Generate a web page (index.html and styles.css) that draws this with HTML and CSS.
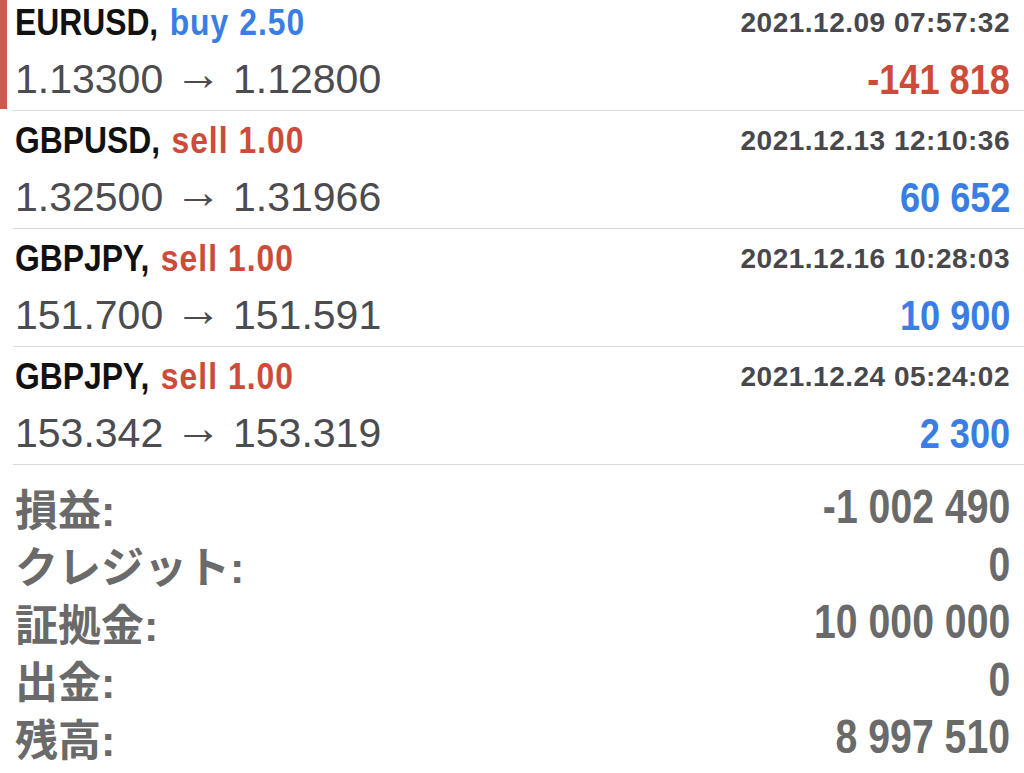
FILE: index.html
```html
<!DOCTYPE html>
<html lang="ja">
<head>
<meta charset="utf-8">
<title>History</title>
<link rel="stylesheet" href="styles.css">
</head>
<body>
<div class="screen">
  <div class="list">
    <div class="trade">
      <div class="accent accent-loss"></div>
      <div class="trade-body">
        <div class="line-top">
          <div class="title"><span class="symbol">EURUSD,</span> <span class="side buy">buy 2.50</span></div>
          <div class="time">2021.12.09 07:57:32</div>
        </div>
        <div class="line-bottom">
          <div class="prices">1.13300 <span class="arrow">→</span> 1.12800</div>
          <div class="profit loss">-141 818</div>
        </div>
      </div>
    </div>
    <div class="trade">
      <div class="accent"></div>
      <div class="trade-body">
        <div class="line-top">
          <div class="title"><span class="symbol">GBPUSD,</span> <span class="side sell">sell 1.00</span></div>
          <div class="time">2021.12.13 12:10:36</div>
        </div>
        <div class="line-bottom">
          <div class="prices">1.32500 <span class="arrow">→</span> 1.31966</div>
          <div class="profit gain">60 652</div>
        </div>
      </div>
    </div>
    <div class="trade">
      <div class="accent"></div>
      <div class="trade-body">
        <div class="line-top">
          <div class="title"><span class="symbol">GBPJPY,</span> <span class="side sell">sell 1.00</span></div>
          <div class="time">2021.12.16 10:28:03</div>
        </div>
        <div class="line-bottom">
          <div class="prices">151.700 <span class="arrow">→</span> 151.591</div>
          <div class="profit gain">10 900</div>
        </div>
      </div>
    </div>
    <div class="trade">
      <div class="accent"></div>
      <div class="trade-body">
        <div class="line-top">
          <div class="title"><span class="symbol">GBPJPY,</span> <span class="side sell">sell 1.00</span></div>
          <div class="time">2021.12.24 05:24:02</div>
        </div>
        <div class="line-bottom">
          <div class="prices">153.342 <span class="arrow">→</span> 153.319</div>
          <div class="profit gain">2 300</div>
        </div>
      </div>
    </div>
  </div>
  <div class="summary">
    <div class="sum-row"><div class="sum-label">損益:</div><div class="sum-value">-1 002 490</div></div>
    <div class="sum-row"><div class="sum-label">クレジット:</div><div class="sum-value">0</div></div>
    <div class="sum-row"><div class="sum-label">証拠金:</div><div class="sum-value">10 000 000</div></div>
    <div class="sum-row"><div class="sum-label">出金:</div><div class="sum-value">0</div></div>
    <div class="sum-row"><div class="sum-label">残高:</div><div class="sum-value">8 997 510</div></div>
  </div>
</div>
</body>
</html>
```
FILE: styles.css
```css
html, body {
  margin: 0;
  padding: 0;
  background: #ffffff;
}

.screen {
  width: 1024px;
  height: 773px;
  overflow: hidden;
  font-family: "Liberation Sans", Arial, sans-serif;
}

.list {
  margin-top: -7px;
}

.trade {
  display: flex;
  height: 118px;
}

.accent {
  width: 7px;
  flex: none;
  margin-bottom: 2px;
}

.accent-loss {
  background: #cf5a4c;
}

.trade-body {
  flex: 1;
  margin-left: 6px;
  padding: 0 14px 0 2px;
  border-bottom: 1px solid #d9d9d9;
  display: flex;
  flex-direction: column;
}

.line-top {
  height: 59px;
  display: flex;
  align-items: center;
  justify-content: space-between;
}

.line-bottom {
  height: 55px;
  display: flex;
  align-items: center;
  justify-content: space-between;
}

.title {
  font-weight: 700;
  font-size: 37px;
  line-height: 1;
  white-space: nowrap;
  display: inline-block;
  transform: scaleX(0.86);
  transform-origin: left center;
}

.symbol {
  color: #111111;
}

.side {
  margin-left: 3px;
  letter-spacing: 1.2px;
}

.side.buy {
  color: #3a7ee4;
}

.side.sell {
  color: #cc4b39;
}

.time {
  font-weight: 700;
  font-size: 28px;
  color: #48484c;
  letter-spacing: 0.5px;
}

.prices {
  font-size: 41px;
  line-height: 1;
  color: #4b4b50;
  white-space: nowrap;
}

.arrow {
  font-size: 47px;
  line-height: 0;
  vertical-align: 3px;
}

.profit {
  font-weight: 700;
  font-size: 42px;
  line-height: 1;
  display: inline-block;
  transform: scaleX(0.86);
  transform-origin: right center;
}

.profit.loss {
  color: #cc4b39;
}

.profit.gain {
  color: #3a7ee4;
}

.summary {
  padding: 13px 14px 0 15px;
}

.sum-row {
  height: 57.5px;
  display: flex;
  align-items: center;
  justify-content: space-between;
  color: #6a6a6a;
}

.sum-label {
  font-family: "Liberation Sans", "Noto Sans CJK JP", sans-serif;
  font-weight: 700;
  font-size: 43px;
}

.sum-value {
  font-weight: 700;
  font-size: 49px;
  line-height: 1;
  display: inline-block;
  transform: scaleX(0.8);
  transform-origin: right center;
}
```
